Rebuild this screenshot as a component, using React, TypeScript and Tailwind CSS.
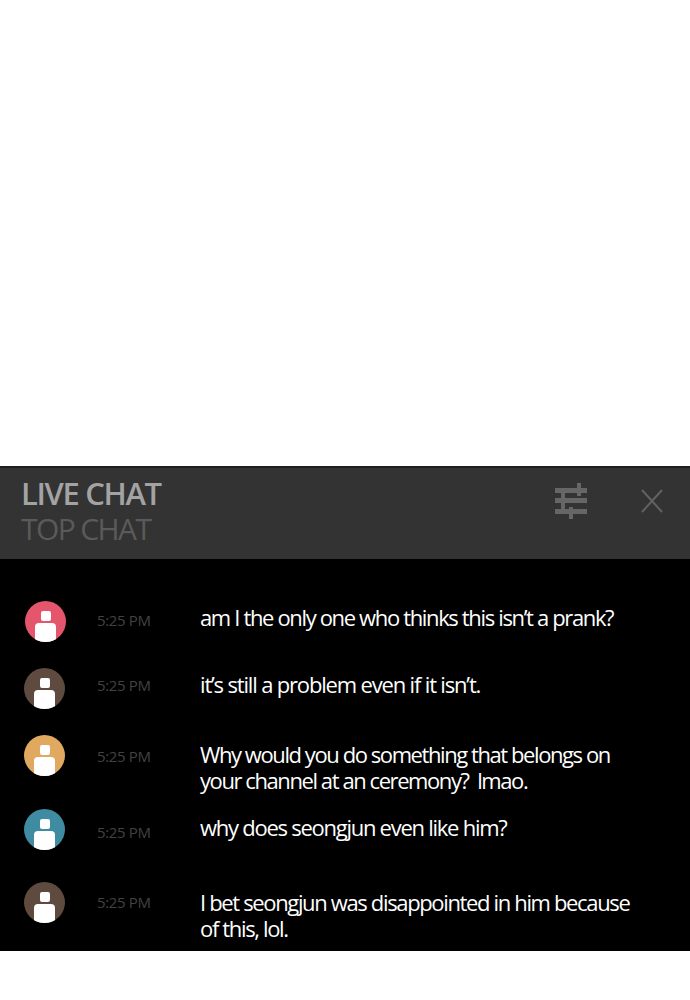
type Message = {
  color: string;
  lines: string[];
  rowClass: string;
  avatarClass: string;
  timeClass: string;
  textClass: string;
};

const messages: Message[] = [
  {
    color: "bg-[#e5566d]",
    lines: ["am I the only one who thinks this isn’t a prank?"],
    rowClass: "h-[67px]",
    avatarClass: "ml-[25px]",
    timeClass: "mt-[11px]",
    textClass: "mt-[3px] tracking-[-1.35px]",
  },
  {
    color: "bg-[#5f4a3f]",
    lines: ["it’s still a problem even if it isn’t."],
    rowClass: "h-[67px]",
    avatarClass: "ml-[24px]",
    timeClass: "mt-[9px]",
    textClass: "mt-[3px] tracking-[-1.17px]",
  },
  {
    color: "bg-[#e0a95f]",
    lines: ["Why would you do something that belongs on", "your channel at an ceremony?  lmao."],
    rowClass: "h-[74px]",
    avatarClass: "ml-[24px]",
    timeClass: "mt-[13px]",
    textClass: "mt-[6px] tracking-[-1.42px]",
  },
  {
    color: "bg-[#3f8ba1]",
    lines: ["why does seongjun even like him?"],
    rowClass: "h-[73px]",
    avatarClass: "ml-[24px]",
    timeClass: "mt-[15px]",
    textClass: "mt-[5px] tracking-[-1.26px]",
  },
  {
    color: "bg-[#5f4a3f]",
    lines: ["I bet seongjun was disappointed in him because", "of this, lol."],
    rowClass: "h-[69px]",
    avatarClass: "ml-[24px]",
    timeClass: "mt-[12px]",
    textClass: "mt-[7px] tracking-[-1.35px]",
  },
];

function Avatar({ color, className }: { color: string; className: string }) {
  return (
    <div className={`flex h-[41px] w-[41px] flex-col items-center gap-[2px] overflow-hidden rounded-full pt-[10px] ${color} ${className}`}>
      <div className="h-[10px] w-[10px] shrink-0 rounded-[2px] bg-white" />
      <div className="h-[24px] w-[21px] shrink-0 rounded-[4px] bg-white" />
    </div>
  );
}

function ChatRow({ message }: { message: Message }) {
  return (
    <div className={`grid grid-cols-[97px_103px_1fr] items-start ${message.rowClass}`}>
      <Avatar color={message.color} className={message.avatarClass} />
      <span className={`text-[15px] leading-[16px] tracking-[-0.35px] text-[#424242] ${message.timeClass}`}>
        5:25 PM
      </span>
      <p className={`text-[22px] leading-[26px] whitespace-pre text-white ${message.textClass}`}>
        {message.lines.join("\n")}
      </p>
    </div>
  );
}

export default function App() {
  return (
    <div className="min-h-[1000px] bg-white pt-[466px] font-['Open_Sans','Noto_Sans',sans-serif]">
      {/* Chat header */}
      <header className="flex h-[93px] items-start justify-between border-t-2 border-[#1f1f1f] bg-[#333333] pr-[26px] pl-[21px]">
        <div className="pt-[8px] leading-[35px]">
          <div className="text-[31px] font-semibold tracking-[-1.35px] text-[#a3a3a3]">LIVE CHAT</div>
          <div className="text-[30px] tracking-[-1.6px] text-[#5a5a5a]">TOP CHAT</div>
        </div>
        <div className="flex items-center gap-[52px] pt-[14px]">
          {/* Filter sliders */}
          <svg width="34" height="38" viewBox="0 0 34 38" className="text-[#666666]" fill="currentColor">
            <rect x="1" y="6" width="32" height="5" />
            <rect x="1" y="16" width="32" height="5" />
            <rect x="1" y="27" width="32" height="5" />
            <rect x="23" y="1" width="4" height="13" />
            <rect x="7" y="11" width="4" height="17" />
            <rect x="15" y="25" width="4" height="12" />
          </svg>
          <svg width="24" height="24" viewBox="0 0 24 24" className="text-[#626262]" stroke="currentColor" strokeWidth="2" fill="none">
            <path d="M2 1 L22 23 M22 1 L2 23" />
          </svg>
        </div>
      </header>

      {/* Message list */}
      <div className="h-[392px] bg-black pt-[42px]">
        {messages.map((message, i) => (
          <ChatRow key={i} message={message} />
        ))}
      </div>
    </div>
  );
}
